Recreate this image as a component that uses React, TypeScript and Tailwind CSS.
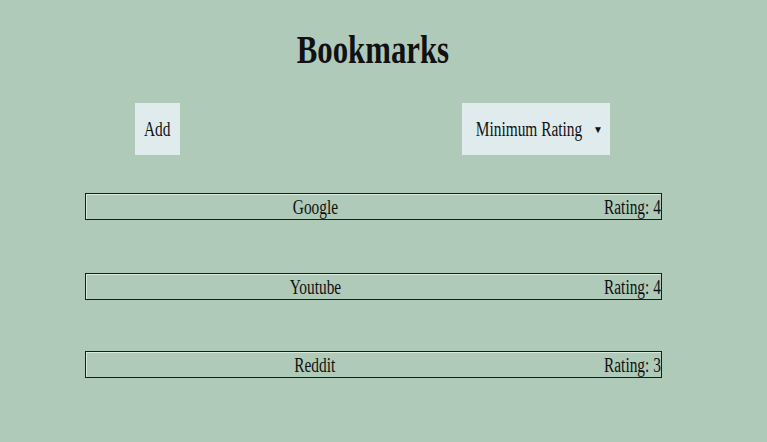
import React from 'react';

const bookmarks = [
  { name: 'Google', rating: 4 },
  { name: 'Youtube', rating: 4 },
  { name: 'Reddit', rating: 3 },
];

const serif = "font-['Times_New_Roman','Liberation_Serif',serif]";

export default function App() {
  return (
    <div className={`min-h-[442px] w-full bg-[#afcab9] text-[#111] ${serif}`}>
      <div className="w-[746px]">
        {/* Title */}
        <div className="flex justify-center pt-[27px]">
          <h1 className="inline-block scale-x-[0.77] text-[40px] font-bold leading-[46px]">Bookmarks</h1>
        </div>

        {/* Controls */}
        <div className="mt-[30px] flex h-[52px] items-stretch">
          <div className="ml-[135px] flex w-[45px] items-center justify-center bg-[#e0ebee]">
            <span className="inline-block scale-x-[0.77] text-[20px]">Add</span>
          </div>
          <div className="ml-[282px] flex w-[148px] items-center bg-[#e0ebee]">
            <span className="ml-[-3px] inline-block w-[140px] scale-x-[0.77] text-center text-[20px]">Minimum Rating</span>
            <span className="ml-[-6px] text-[10px]">▼</span>
          </div>
        </div>

        {/* List */}
        <div className="mt-[38px] flex flex-col pl-[85px]">
          {bookmarks.map((b, i) => (
            <div
              key={b.name}
              className={`flex h-[27px] w-[577px] items-center border border-[#1c1c1c] shadow-[inset_1px_1px_0_#d8eadc] ${
                i === 0 ? '' : i === 1 ? 'mt-[53px]' : 'mt-[51px]'
              }`}
            >
              <div className="flex w-[458px] justify-center">
                <span className="inline-block scale-x-[0.77] text-[20px] leading-[24px]">{b.name}</span>
              </div>
              <div className="flex flex-1 justify-end">
                <span className="inline-block origin-right scale-x-[0.77] text-[20px] leading-[24px]">Rating: {b.rating}</span>
              </div>
            </div>
          ))}
        </div>
      </div>
    </div>
  );
}
